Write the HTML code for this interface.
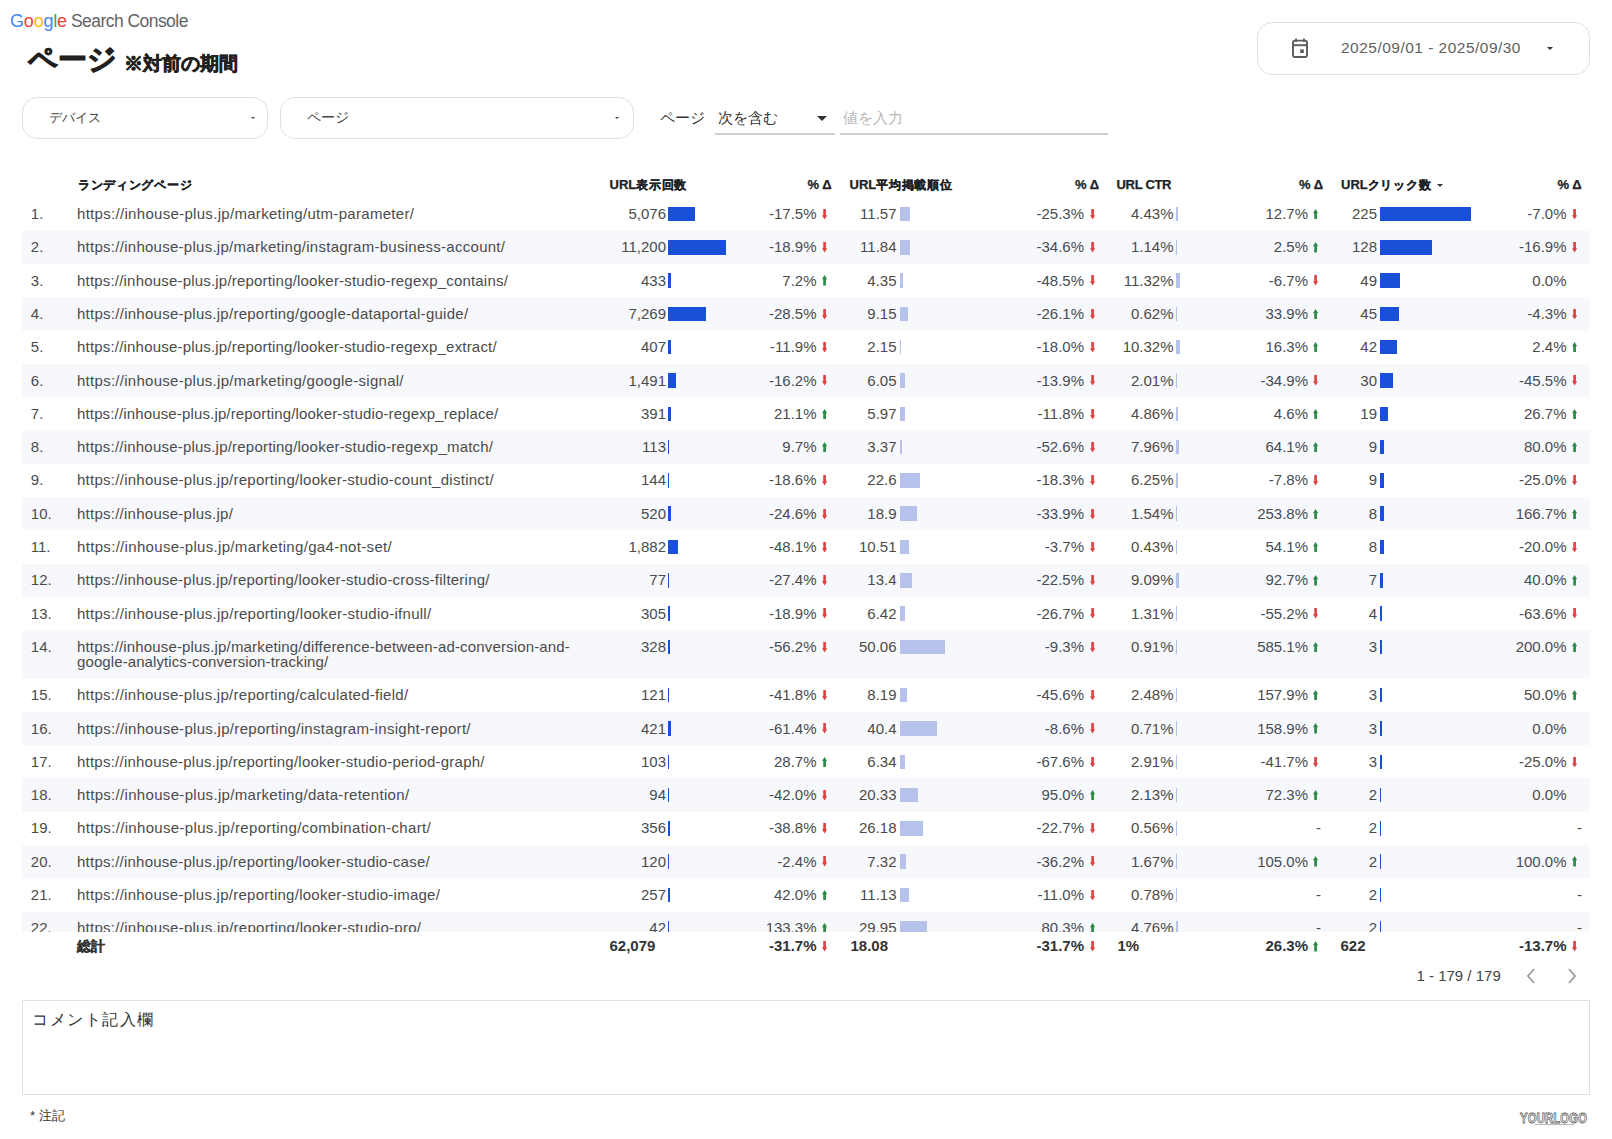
<!DOCTYPE html>
<html lang="ja"><head><meta charset="utf-8"><title>Search Console Report</title>
<style>
html,body{margin:0;padding:0;background:#fff;}
body{width:1612px;height:1139px;position:relative;overflow:hidden;font-family:"Liberation Sans",sans-serif;color:#3c3c3c;}
.abs{position:absolute;white-space:nowrap;}
.row{position:absolute;left:22px;width:1568px;background:#fff;}
.row.alt{background:#f7f8fb;}
.t{position:absolute;white-space:nowrap;font-size:15px;line-height:20px;height:20px;color:#4b4b4b;}
.url2{line-height:15.5px;height:auto;}
.bar{position:absolute;height:14.6px;}
.b1{background:#1a4fd7;}
.b2{background:#b7c2ea;}
.ar{position:absolute;}
.hd{position:absolute;white-space:nowrap;font-size:13px;font-weight:bold;color:#202124;line-height:20px;top:174.8px;-webkit-text-stroke:0.25px #202124;}
.jp{font-size:12px;letter-spacing:0.7px;}
.box{position:absolute;border:1.6px solid #e0e0e0;border-radius:15px;box-sizing:border-box;}
.tri{position:absolute;width:0;height:0;border-left:3px solid transparent;border-right:3px solid transparent;border-top:3px solid #333;}
</style></head><body>
<div class="abs" style="left:10px;top:8.5px;font-size:18px;line-height:24px;letter-spacing:-0.2px"><span style="color:#4285f4">G</span><span style="color:#ea4335">o</span><span style="color:#fbbc05">o</span><span style="color:#4285f4">g</span><span style="color:#34a853">l</span><span style="color:#ea4335">e</span></div>
<div class="abs" style="left:71px;top:8.5px;font-size:17.5px;line-height:24px;letter-spacing:-0.55px;color:#5f6368">Search Console</div>
<div class="abs" style="left:28px;top:40.5px;font-size:29px;line-height:36px;font-weight:bold;color:#202020;-webkit-text-stroke:0.9px #202020">ページ</div>
<div class="abs" style="left:124px;top:52px;font-size:19px;line-height:24px;font-weight:bold;color:#202020;-webkit-text-stroke:0.6px #202020">※対前の期間</div>

<div class="box" style="left:1257px;top:22px;width:333px;height:53px"></div>
<svg style="position:absolute;left:1290px;top:37px" width="20" height="22" viewBox="0 0 20 22"><path d="M6 2.2V4.2M14 2.2V4.2" stroke="#5a5a5a" stroke-width="1.8" stroke-linecap="round"/><rect x="3" y="3.6" width="14" height="16.4" rx="2" fill="none" stroke="#5a5a5a" stroke-width="1.9"/><path d="M3 8.2H17" stroke="#5a5a5a" stroke-width="1.9"/><rect x="10.2" y="12.4" width="3.6" height="3.6" fill="#5a5a5a"/></svg>
<div class="abs" style="left:1341px;top:38px;font-size:15.5px;line-height:20px;letter-spacing:0.48px;color:#5f5f5f">2025/09/01 - 2025/09/30</div>
<div class="tri" style="left:1547px;top:47px"></div>

<div class="box" style="left:22px;top:97px;width:246px;height:42px"></div>
<div class="abs" style="left:49px;top:108px;font-size:13px;line-height:20px;color:#444">デバイス</div>
<div class="tri" style="left:250.5px;top:117px;border-left-width:2.6px;border-right-width:2.6px;border-top-width:2.6px;border-top-color:#444"></div>
<div class="box" style="left:280px;top:97px;width:354px;height:42px"></div>
<div class="abs" style="left:307px;top:108px;font-size:13.5px;line-height:20px;color:#444">ページ</div>
<div class="tri" style="left:614.5px;top:117px;border-left-width:2.6px;border-right-width:2.6px;border-top-width:2.6px;border-top-color:#444"></div>

<div class="abs" style="left:660px;top:108px;font-size:15px;line-height:20px;color:#333">ページ</div>
<div class="abs" style="left:718px;top:108px;font-size:15px;line-height:20px;color:#333">次を含む</div>
<div class="tri" style="left:817px;top:116px;border-left-width:5px;border-right-width:5px;border-top-width:5px"></div>
<div class="abs" style="left:715px;top:133px;width:120px;height:1.5px;background:#cfcfcf"></div>
<div class="abs" style="left:843px;top:108px;font-size:15px;line-height:20px;color:#b8b8b8">値を入力</div>
<div class="abs" style="left:840px;top:133px;width:268px;height:1.5px;background:#cfcfcf"></div>

<div class="hd" style="left:78px"><span class="jp">ランディングページ</span></div>
<div class="hd" style="left:609.5px">URL<span class="jp">表示回数</span></div>
<div class="hd" style="right:780.5px">% Δ</div>
<div class="hd" style="left:849.5px">URL<span class="jp">平均掲載順位</span></div>
<div class="hd" style="right:513px">% Δ</div>
<div class="hd" style="left:1116.5px;letter-spacing:-0.3px">URL CTR</div>
<div class="hd" style="right:289px">% Δ</div>
<div class="hd" style="left:1341px">URL<span class="jp">クリック数</span></div>
<div class="tri" style="left:1437px;top:183.5px"></div>
<div class="hd" style="right:30.5px">% Δ</div>

<div style="position:absolute;left:0;top:0;width:1612px;height:931.5px;overflow:hidden">
<div class="row" style="top:197.35px;height:33.30px"></div>
<div class="t l" style="left:30.8px;top:204.00px">1.</div>
<div class="t l" style="left:77px;top:204.00px;letter-spacing:0.304px">https://inhouse-plus.jp/marketing/utm-parameter/</div>
<div class="t r" style="right:946.0px;top:204.00px">5,076</div>
<div class="bar b1" style="left:668px;top:206.70px;width:26.5px"></div>
<div class="t r" style="right:795.5px;top:204.00px">-17.5%</div>
<svg class="ar" style="left:821.8px;top:208.8px" width="5.2" height="10.5" viewBox="0 0 5.2 10.5"><path d="M1.25 0H3.95V6.2H5.2L2.6 10.5L0 6.2H1.25Z" fill="#dc4444"/></svg>
<div class="t r" style="right:715.5px;top:204.00px">11.57</div>
<div class="bar b2" style="left:899.5px;top:206.70px;width:10.3px"></div>
<div class="t r" style="right:528.0px;top:204.00px">-25.3%</div>
<svg class="ar" style="left:1089.6px;top:208.8px" width="5.2" height="10.5" viewBox="0 0 5.2 10.5"><path d="M1.25 0H3.95V6.2H5.2L2.6 10.5L0 6.2H1.25Z" fill="#dc4444"/></svg>
<div class="t r" style="right:438.5px;top:204.00px">4.43%</div>
<div class="bar b2" style="left:1175.6px;top:206.70px;width:2.0px"></div>
<div class="t r" style="right:304.0px;top:204.00px">12.7%</div>
<svg class="ar" style="left:1312.6px;top:208.8px" width="5.2" height="10.5" viewBox="0 0 5.2 10.5"><path d="M1.25 10.5H3.95V4.3H5.2L2.6 0L0 4.3H1.25Z" fill="#2a8a45"/></svg>
<div class="t r" style="right:235.0px;top:204.00px">225</div>
<div class="bar b1" style="left:1379.9px;top:206.70px;width:90.8px"></div>
<div class="t r" style="right:45.5px;top:204.00px">-7.0%</div>
<svg class="ar" style="left:1572.0px;top:208.8px" width="5.2" height="10.5" viewBox="0 0 5.2 10.5"><path d="M1.25 0H3.95V6.2H5.2L2.6 10.5L0 6.2H1.25Z" fill="#dc4444"/></svg>
<div class="row alt" style="top:230.65px;height:33.30px"></div>
<div class="t l" style="left:30.8px;top:237.30px">2.</div>
<div class="t l" style="left:77px;top:237.30px;letter-spacing:0.268px">https://inhouse-plus.jp/marketing/instagram-business-account/</div>
<div class="t r" style="right:946.0px;top:237.30px">11,200</div>
<div class="bar b1" style="left:668px;top:240.00px;width:57.8px"></div>
<div class="t r" style="right:795.5px;top:237.30px">-18.9%</div>
<svg class="ar" style="left:821.8px;top:242.0px" width="5.2" height="10.5" viewBox="0 0 5.2 10.5"><path d="M1.25 0H3.95V6.2H5.2L2.6 10.5L0 6.2H1.25Z" fill="#dc4444"/></svg>
<div class="t r" style="right:715.5px;top:237.30px">11.84</div>
<div class="bar b2" style="left:899.5px;top:240.00px;width:10.6px"></div>
<div class="t r" style="right:528.0px;top:237.30px">-34.6%</div>
<svg class="ar" style="left:1089.6px;top:242.0px" width="5.2" height="10.5" viewBox="0 0 5.2 10.5"><path d="M1.25 0H3.95V6.2H5.2L2.6 10.5L0 6.2H1.25Z" fill="#dc4444"/></svg>
<div class="t r" style="right:438.5px;top:237.30px">1.14%</div>
<div class="bar b2" style="left:1175.6px;top:240.00px;width:1.0px"></div>
<div class="t r" style="right:304.0px;top:237.30px">2.5%</div>
<svg class="ar" style="left:1312.6px;top:242.0px" width="5.2" height="10.5" viewBox="0 0 5.2 10.5"><path d="M1.25 10.5H3.95V4.3H5.2L2.6 0L0 4.3H1.25Z" fill="#2a8a45"/></svg>
<div class="t r" style="right:235.0px;top:237.30px">128</div>
<div class="bar b1" style="left:1379.9px;top:240.00px;width:52.0px"></div>
<div class="t r" style="right:45.5px;top:237.30px">-16.9%</div>
<svg class="ar" style="left:1572.0px;top:242.0px" width="5.2" height="10.5" viewBox="0 0 5.2 10.5"><path d="M1.25 0H3.95V6.2H5.2L2.6 10.5L0 6.2H1.25Z" fill="#dc4444"/></svg>
<div class="row" style="top:263.95px;height:33.30px"></div>
<div class="t l" style="left:30.8px;top:270.60px">3.</div>
<div class="t l" style="left:77px;top:270.60px;letter-spacing:0.194px">https://inhouse-plus.jp/reporting/looker-studio-regexp_contains/</div>
<div class="t r" style="right:946.0px;top:270.60px">433</div>
<div class="bar b1" style="left:668px;top:273.30px;width:2.8px"></div>
<div class="t r" style="right:795.5px;top:270.60px">7.2%</div>
<svg class="ar" style="left:821.8px;top:275.3px" width="5.2" height="10.5" viewBox="0 0 5.2 10.5"><path d="M1.25 10.5H3.95V4.3H5.2L2.6 0L0 4.3H1.25Z" fill="#2a8a45"/></svg>
<div class="t r" style="right:715.5px;top:270.60px">4.35</div>
<div class="bar b2" style="left:899.5px;top:273.30px;width:3.6px"></div>
<div class="t r" style="right:528.0px;top:270.60px">-48.5%</div>
<svg class="ar" style="left:1089.6px;top:275.3px" width="5.2" height="10.5" viewBox="0 0 5.2 10.5"><path d="M1.25 0H3.95V6.2H5.2L2.6 10.5L0 6.2H1.25Z" fill="#dc4444"/></svg>
<div class="t r" style="right:438.5px;top:270.60px">11.32%</div>
<div class="bar b2" style="left:1175.6px;top:273.30px;width:4.5px"></div>
<div class="t r" style="right:304.0px;top:270.60px">-6.7%</div>
<svg class="ar" style="left:1312.6px;top:275.3px" width="5.2" height="10.5" viewBox="0 0 5.2 10.5"><path d="M1.25 0H3.95V6.2H5.2L2.6 10.5L0 6.2H1.25Z" fill="#dc4444"/></svg>
<div class="t r" style="right:235.0px;top:270.60px">49</div>
<div class="bar b1" style="left:1379.9px;top:273.30px;width:20.4px"></div>
<div class="t r" style="right:45.5px;top:270.60px">0.0%</div>

<div class="row alt" style="top:297.25px;height:33.30px"></div>
<div class="t l" style="left:30.8px;top:303.90px">4.</div>
<div class="t l" style="left:77px;top:303.90px;letter-spacing:0.263px">https://inhouse-plus.jp/reporting/google-dataportal-guide/</div>
<div class="t r" style="right:946.0px;top:303.90px">7,269</div>
<div class="bar b1" style="left:668px;top:306.60px;width:37.7px"></div>
<div class="t r" style="right:795.5px;top:303.90px">-28.5%</div>
<svg class="ar" style="left:821.8px;top:308.6px" width="5.2" height="10.5" viewBox="0 0 5.2 10.5"><path d="M1.25 0H3.95V6.2H5.2L2.6 10.5L0 6.2H1.25Z" fill="#dc4444"/></svg>
<div class="t r" style="right:715.5px;top:303.90px">9.15</div>
<div class="bar b2" style="left:899.5px;top:306.60px;width:8.1px"></div>
<div class="t r" style="right:528.0px;top:303.90px">-26.1%</div>
<svg class="ar" style="left:1089.6px;top:308.6px" width="5.2" height="10.5" viewBox="0 0 5.2 10.5"><path d="M1.25 0H3.95V6.2H5.2L2.6 10.5L0 6.2H1.25Z" fill="#dc4444"/></svg>
<div class="t r" style="right:438.5px;top:303.90px">0.62%</div>
<div class="bar b2" style="left:1175.6px;top:306.60px;width:1.0px"></div>
<div class="t r" style="right:304.0px;top:303.90px">33.9%</div>
<svg class="ar" style="left:1312.6px;top:308.6px" width="5.2" height="10.5" viewBox="0 0 5.2 10.5"><path d="M1.25 10.5H3.95V4.3H5.2L2.6 0L0 4.3H1.25Z" fill="#2a8a45"/></svg>
<div class="t r" style="right:235.0px;top:303.90px">45</div>
<div class="bar b1" style="left:1379.9px;top:306.60px;width:18.8px"></div>
<div class="t r" style="right:45.5px;top:303.90px">-4.3%</div>
<svg class="ar" style="left:1572.0px;top:308.6px" width="5.2" height="10.5" viewBox="0 0 5.2 10.5"><path d="M1.25 0H3.95V6.2H5.2L2.6 10.5L0 6.2H1.25Z" fill="#dc4444"/></svg>
<div class="row" style="top:330.55px;height:33.30px"></div>
<div class="t l" style="left:30.8px;top:337.20px">5.</div>
<div class="t l" style="left:77px;top:337.20px;letter-spacing:0.192px">https://inhouse-plus.jp/reporting/looker-studio-regexp_extract/</div>
<div class="t r" style="right:946.0px;top:337.20px">407</div>
<div class="bar b1" style="left:668px;top:339.90px;width:2.7px"></div>
<div class="t r" style="right:795.5px;top:337.20px">-11.9%</div>
<svg class="ar" style="left:821.8px;top:341.9px" width="5.2" height="10.5" viewBox="0 0 5.2 10.5"><path d="M1.25 0H3.95V6.2H5.2L2.6 10.5L0 6.2H1.25Z" fill="#dc4444"/></svg>
<div class="t r" style="right:715.5px;top:337.20px">2.15</div>
<div class="bar b2" style="left:899.5px;top:339.90px;width:1.6px"></div>
<div class="t r" style="right:528.0px;top:337.20px">-18.0%</div>
<svg class="ar" style="left:1089.6px;top:341.9px" width="5.2" height="10.5" viewBox="0 0 5.2 10.5"><path d="M1.25 0H3.95V6.2H5.2L2.6 10.5L0 6.2H1.25Z" fill="#dc4444"/></svg>
<div class="t r" style="right:438.5px;top:337.20px">10.32%</div>
<div class="bar b2" style="left:1175.6px;top:339.90px;width:4.1px"></div>
<div class="t r" style="right:304.0px;top:337.20px">16.3%</div>
<svg class="ar" style="left:1312.6px;top:341.9px" width="5.2" height="10.5" viewBox="0 0 5.2 10.5"><path d="M1.25 10.5H3.95V4.3H5.2L2.6 0L0 4.3H1.25Z" fill="#2a8a45"/></svg>
<div class="t r" style="right:235.0px;top:337.20px">42</div>
<div class="bar b1" style="left:1379.9px;top:339.90px;width:17.6px"></div>
<div class="t r" style="right:45.5px;top:337.20px">2.4%</div>
<svg class="ar" style="left:1572.0px;top:341.9px" width="5.2" height="10.5" viewBox="0 0 5.2 10.5"><path d="M1.25 10.5H3.95V4.3H5.2L2.6 0L0 4.3H1.25Z" fill="#2a8a45"/></svg>
<div class="row alt" style="top:363.85px;height:33.30px"></div>
<div class="t l" style="left:30.8px;top:370.50px">6.</div>
<div class="t l" style="left:77px;top:370.50px;letter-spacing:0.277px">https://inhouse-plus.jp/marketing/google-signal/</div>
<div class="t r" style="right:946.0px;top:370.50px">1,491</div>
<div class="bar b1" style="left:668px;top:373.20px;width:8.2px"></div>
<div class="t r" style="right:795.5px;top:370.50px">-16.2%</div>
<svg class="ar" style="left:821.8px;top:375.2px" width="5.2" height="10.5" viewBox="0 0 5.2 10.5"><path d="M1.25 0H3.95V6.2H5.2L2.6 10.5L0 6.2H1.25Z" fill="#dc4444"/></svg>
<div class="t r" style="right:715.5px;top:370.50px">6.05</div>
<div class="bar b2" style="left:899.5px;top:373.20px;width:5.2px"></div>
<div class="t r" style="right:528.0px;top:370.50px">-13.9%</div>
<svg class="ar" style="left:1089.6px;top:375.2px" width="5.2" height="10.5" viewBox="0 0 5.2 10.5"><path d="M1.25 0H3.95V6.2H5.2L2.6 10.5L0 6.2H1.25Z" fill="#dc4444"/></svg>
<div class="t r" style="right:438.5px;top:370.50px">2.01%</div>
<div class="bar b2" style="left:1175.6px;top:373.20px;width:1.1px"></div>
<div class="t r" style="right:304.0px;top:370.50px">-34.9%</div>
<svg class="ar" style="left:1312.6px;top:375.2px" width="5.2" height="10.5" viewBox="0 0 5.2 10.5"><path d="M1.25 0H3.95V6.2H5.2L2.6 10.5L0 6.2H1.25Z" fill="#dc4444"/></svg>
<div class="t r" style="right:235.0px;top:370.50px">30</div>
<div class="bar b1" style="left:1379.9px;top:373.20px;width:12.8px"></div>
<div class="t r" style="right:45.5px;top:370.50px">-45.5%</div>
<svg class="ar" style="left:1572.0px;top:375.2px" width="5.2" height="10.5" viewBox="0 0 5.2 10.5"><path d="M1.25 0H3.95V6.2H5.2L2.6 10.5L0 6.2H1.25Z" fill="#dc4444"/></svg>
<div class="row" style="top:397.15px;height:33.30px"></div>
<div class="t l" style="left:30.8px;top:403.80px">7.</div>
<div class="t l" style="left:77px;top:403.80px;letter-spacing:0.150px">https://inhouse-plus.jp/reporting/looker-studio-regexp_replace/</div>
<div class="t r" style="right:946.0px;top:403.80px">391</div>
<div class="bar b1" style="left:668px;top:406.50px;width:2.6px"></div>
<div class="t r" style="right:795.5px;top:403.80px">21.1%</div>
<svg class="ar" style="left:821.8px;top:408.6px" width="5.2" height="10.5" viewBox="0 0 5.2 10.5"><path d="M1.25 10.5H3.95V4.3H5.2L2.6 0L0 4.3H1.25Z" fill="#2a8a45"/></svg>
<div class="t r" style="right:715.5px;top:403.80px">5.97</div>
<div class="bar b2" style="left:899.5px;top:406.50px;width:5.1px"></div>
<div class="t r" style="right:528.0px;top:403.80px">-11.8%</div>
<svg class="ar" style="left:1089.6px;top:408.6px" width="5.2" height="10.5" viewBox="0 0 5.2 10.5"><path d="M1.25 0H3.95V6.2H5.2L2.6 10.5L0 6.2H1.25Z" fill="#dc4444"/></svg>
<div class="t r" style="right:438.5px;top:403.80px">4.86%</div>
<div class="bar b2" style="left:1175.6px;top:406.50px;width:2.1px"></div>
<div class="t r" style="right:304.0px;top:403.80px">4.6%</div>
<svg class="ar" style="left:1312.6px;top:408.6px" width="5.2" height="10.5" viewBox="0 0 5.2 10.5"><path d="M1.25 10.5H3.95V4.3H5.2L2.6 0L0 4.3H1.25Z" fill="#2a8a45"/></svg>
<div class="t r" style="right:235.0px;top:403.80px">19</div>
<div class="bar b1" style="left:1379.9px;top:406.50px;width:8.4px"></div>
<div class="t r" style="right:45.5px;top:403.80px">26.7%</div>
<svg class="ar" style="left:1572.0px;top:408.6px" width="5.2" height="10.5" viewBox="0 0 5.2 10.5"><path d="M1.25 10.5H3.95V4.3H5.2L2.6 0L0 4.3H1.25Z" fill="#2a8a45"/></svg>
<div class="row alt" style="top:430.45px;height:33.30px"></div>
<div class="t l" style="left:30.8px;top:437.10px">8.</div>
<div class="t l" style="left:77px;top:437.10px;letter-spacing:0.208px">https://inhouse-plus.jp/reporting/looker-studio-regexp_match/</div>
<div class="t r" style="right:946.0px;top:437.10px">113</div>
<div class="bar b1" style="left:668px;top:439.80px;width:1.2px"></div>
<div class="t r" style="right:795.5px;top:437.10px">9.7%</div>
<svg class="ar" style="left:821.8px;top:441.9px" width="5.2" height="10.5" viewBox="0 0 5.2 10.5"><path d="M1.25 10.5H3.95V4.3H5.2L2.6 0L0 4.3H1.25Z" fill="#2a8a45"/></svg>
<div class="t r" style="right:715.5px;top:437.10px">3.37</div>
<div class="bar b2" style="left:899.5px;top:439.80px;width:2.7px"></div>
<div class="t r" style="right:528.0px;top:437.10px">-52.6%</div>
<svg class="ar" style="left:1089.6px;top:441.9px" width="5.2" height="10.5" viewBox="0 0 5.2 10.5"><path d="M1.25 0H3.95V6.2H5.2L2.6 10.5L0 6.2H1.25Z" fill="#dc4444"/></svg>
<div class="t r" style="right:438.5px;top:437.10px">7.96%</div>
<div class="bar b2" style="left:1175.6px;top:439.80px;width:3.3px"></div>
<div class="t r" style="right:304.0px;top:437.10px">64.1%</div>
<svg class="ar" style="left:1312.6px;top:441.9px" width="5.2" height="10.5" viewBox="0 0 5.2 10.5"><path d="M1.25 10.5H3.95V4.3H5.2L2.6 0L0 4.3H1.25Z" fill="#2a8a45"/></svg>
<div class="t r" style="right:235.0px;top:437.10px">9</div>
<div class="bar b1" style="left:1379.9px;top:439.80px;width:4.4px"></div>
<div class="t r" style="right:45.5px;top:437.10px">80.0%</div>
<svg class="ar" style="left:1572.0px;top:441.9px" width="5.2" height="10.5" viewBox="0 0 5.2 10.5"><path d="M1.25 10.5H3.95V4.3H5.2L2.6 0L0 4.3H1.25Z" fill="#2a8a45"/></svg>
<div class="row" style="top:463.75px;height:33.30px"></div>
<div class="t l" style="left:30.8px;top:470.40px">9.</div>
<div class="t l" style="left:77px;top:470.40px;letter-spacing:0.266px">https://inhouse-plus.jp/reporting/looker-studio-count_distinct/</div>
<div class="t r" style="right:946.0px;top:470.40px">144</div>
<div class="bar b1" style="left:668px;top:473.10px;width:1.3px"></div>
<div class="t r" style="right:795.5px;top:470.40px">-18.6%</div>
<svg class="ar" style="left:821.8px;top:475.2px" width="5.2" height="10.5" viewBox="0 0 5.2 10.5"><path d="M1.25 0H3.95V6.2H5.2L2.6 10.5L0 6.2H1.25Z" fill="#dc4444"/></svg>
<div class="t r" style="right:715.5px;top:470.40px">22.6</div>
<div class="bar b2" style="left:899.5px;top:473.10px;width:20.5px"></div>
<div class="t r" style="right:528.0px;top:470.40px">-18.3%</div>
<svg class="ar" style="left:1089.6px;top:475.2px" width="5.2" height="10.5" viewBox="0 0 5.2 10.5"><path d="M1.25 0H3.95V6.2H5.2L2.6 10.5L0 6.2H1.25Z" fill="#dc4444"/></svg>
<div class="t r" style="right:438.5px;top:470.40px">6.25%</div>
<div class="bar b2" style="left:1175.6px;top:473.10px;width:2.6px"></div>
<div class="t r" style="right:304.0px;top:470.40px">-7.8%</div>
<svg class="ar" style="left:1312.6px;top:475.2px" width="5.2" height="10.5" viewBox="0 0 5.2 10.5"><path d="M1.25 0H3.95V6.2H5.2L2.6 10.5L0 6.2H1.25Z" fill="#dc4444"/></svg>
<div class="t r" style="right:235.0px;top:470.40px">9</div>
<div class="bar b1" style="left:1379.9px;top:473.10px;width:4.4px"></div>
<div class="t r" style="right:45.5px;top:470.40px">-25.0%</div>
<svg class="ar" style="left:1572.0px;top:475.2px" width="5.2" height="10.5" viewBox="0 0 5.2 10.5"><path d="M1.25 0H3.95V6.2H5.2L2.6 10.5L0 6.2H1.25Z" fill="#dc4444"/></svg>
<div class="row alt" style="top:497.05px;height:33.30px"></div>
<div class="t l" style="left:30.8px;top:503.70px">10.</div>
<div class="t l" style="left:77px;top:503.70px;letter-spacing:0.252px">https://inhouse-plus.jp/</div>
<div class="t r" style="right:946.0px;top:503.70px">520</div>
<div class="bar b1" style="left:668px;top:506.40px;width:3.3px"></div>
<div class="t r" style="right:795.5px;top:503.70px">-24.6%</div>
<svg class="ar" style="left:821.8px;top:508.5px" width="5.2" height="10.5" viewBox="0 0 5.2 10.5"><path d="M1.25 0H3.95V6.2H5.2L2.6 10.5L0 6.2H1.25Z" fill="#dc4444"/></svg>
<div class="t r" style="right:715.5px;top:503.70px">18.9</div>
<div class="bar b2" style="left:899.5px;top:506.40px;width:17.1px"></div>
<div class="t r" style="right:528.0px;top:503.70px">-33.9%</div>
<svg class="ar" style="left:1089.6px;top:508.5px" width="5.2" height="10.5" viewBox="0 0 5.2 10.5"><path d="M1.25 0H3.95V6.2H5.2L2.6 10.5L0 6.2H1.25Z" fill="#dc4444"/></svg>
<div class="t r" style="right:438.5px;top:503.70px">1.54%</div>
<div class="bar b2" style="left:1175.6px;top:506.40px;width:1.0px"></div>
<div class="t r" style="right:304.0px;top:503.70px">253.8%</div>
<svg class="ar" style="left:1312.6px;top:508.5px" width="5.2" height="10.5" viewBox="0 0 5.2 10.5"><path d="M1.25 10.5H3.95V4.3H5.2L2.6 0L0 4.3H1.25Z" fill="#2a8a45"/></svg>
<div class="t r" style="right:235.0px;top:503.70px">8</div>
<div class="bar b1" style="left:1379.9px;top:506.40px;width:4.0px"></div>
<div class="t r" style="right:45.5px;top:503.70px">166.7%</div>
<svg class="ar" style="left:1572.0px;top:508.5px" width="5.2" height="10.5" viewBox="0 0 5.2 10.5"><path d="M1.25 10.5H3.95V4.3H5.2L2.6 0L0 4.3H1.25Z" fill="#2a8a45"/></svg>
<div class="row" style="top:530.35px;height:33.30px"></div>
<div class="t l" style="left:30.8px;top:537.00px">11.</div>
<div class="t l" style="left:77px;top:537.00px;letter-spacing:0.324px">https://inhouse-plus.jp/marketing/ga4-not-set/</div>
<div class="t r" style="right:946.0px;top:537.00px">1,882</div>
<div class="bar b1" style="left:668px;top:539.70px;width:10.2px"></div>
<div class="t r" style="right:795.5px;top:537.00px">-48.1%</div>
<svg class="ar" style="left:821.8px;top:541.8px" width="5.2" height="10.5" viewBox="0 0 5.2 10.5"><path d="M1.25 0H3.95V6.2H5.2L2.6 10.5L0 6.2H1.25Z" fill="#dc4444"/></svg>
<div class="t r" style="right:715.5px;top:537.00px">10.51</div>
<div class="bar b2" style="left:899.5px;top:539.70px;width:9.3px"></div>
<div class="t r" style="right:528.0px;top:537.00px">-3.7%</div>
<svg class="ar" style="left:1089.6px;top:541.8px" width="5.2" height="10.5" viewBox="0 0 5.2 10.5"><path d="M1.25 0H3.95V6.2H5.2L2.6 10.5L0 6.2H1.25Z" fill="#dc4444"/></svg>
<div class="t r" style="right:438.5px;top:537.00px">0.43%</div>
<div class="bar b2" style="left:1175.6px;top:539.70px;width:1.0px"></div>
<div class="t r" style="right:304.0px;top:537.00px">54.1%</div>
<svg class="ar" style="left:1312.6px;top:541.8px" width="5.2" height="10.5" viewBox="0 0 5.2 10.5"><path d="M1.25 10.5H3.95V4.3H5.2L2.6 0L0 4.3H1.25Z" fill="#2a8a45"/></svg>
<div class="t r" style="right:235.0px;top:537.00px">8</div>
<div class="bar b1" style="left:1379.9px;top:539.70px;width:4.0px"></div>
<div class="t r" style="right:45.5px;top:537.00px">-20.0%</div>
<svg class="ar" style="left:1572.0px;top:541.8px" width="5.2" height="10.5" viewBox="0 0 5.2 10.5"><path d="M1.25 0H3.95V6.2H5.2L2.6 10.5L0 6.2H1.25Z" fill="#dc4444"/></svg>
<div class="row alt" style="top:563.65px;height:33.30px"></div>
<div class="t l" style="left:30.8px;top:570.30px">12.</div>
<div class="t l" style="left:77px;top:570.30px;letter-spacing:0.235px">https://inhouse-plus.jp/reporting/looker-studio-cross-filtering/</div>
<div class="t r" style="right:946.0px;top:570.30px">77</div>
<div class="bar b1" style="left:668px;top:573.00px;width:1.0px"></div>
<div class="t r" style="right:795.5px;top:570.30px">-27.4%</div>
<svg class="ar" style="left:821.8px;top:575.0px" width="5.2" height="10.5" viewBox="0 0 5.2 10.5"><path d="M1.25 0H3.95V6.2H5.2L2.6 10.5L0 6.2H1.25Z" fill="#dc4444"/></svg>
<div class="t r" style="right:715.5px;top:570.30px">13.4</div>
<div class="bar b2" style="left:899.5px;top:573.00px;width:12.0px"></div>
<div class="t r" style="right:528.0px;top:570.30px">-22.5%</div>
<svg class="ar" style="left:1089.6px;top:575.0px" width="5.2" height="10.5" viewBox="0 0 5.2 10.5"><path d="M1.25 0H3.95V6.2H5.2L2.6 10.5L0 6.2H1.25Z" fill="#dc4444"/></svg>
<div class="t r" style="right:438.5px;top:570.30px">9.09%</div>
<div class="bar b2" style="left:1175.6px;top:573.00px;width:3.7px"></div>
<div class="t r" style="right:304.0px;top:570.30px">92.7%</div>
<svg class="ar" style="left:1312.6px;top:575.0px" width="5.2" height="10.5" viewBox="0 0 5.2 10.5"><path d="M1.25 10.5H3.95V4.3H5.2L2.6 0L0 4.3H1.25Z" fill="#2a8a45"/></svg>
<div class="t r" style="right:235.0px;top:570.30px">7</div>
<div class="bar b1" style="left:1379.9px;top:573.00px;width:3.6px"></div>
<div class="t r" style="right:45.5px;top:570.30px">40.0%</div>
<svg class="ar" style="left:1572.0px;top:575.0px" width="5.2" height="10.5" viewBox="0 0 5.2 10.5"><path d="M1.25 10.5H3.95V4.3H5.2L2.6 0L0 4.3H1.25Z" fill="#2a8a45"/></svg>
<div class="row" style="top:596.95px;height:33.30px"></div>
<div class="t l" style="left:30.8px;top:603.60px">13.</div>
<div class="t l" style="left:77px;top:603.60px;letter-spacing:0.274px">https://inhouse-plus.jp/reporting/looker-studio-ifnull/</div>
<div class="t r" style="right:946.0px;top:603.60px">305</div>
<div class="bar b1" style="left:668px;top:606.30px;width:2.2px"></div>
<div class="t r" style="right:795.5px;top:603.60px">-18.9%</div>
<svg class="ar" style="left:821.8px;top:608.3px" width="5.2" height="10.5" viewBox="0 0 5.2 10.5"><path d="M1.25 0H3.95V6.2H5.2L2.6 10.5L0 6.2H1.25Z" fill="#dc4444"/></svg>
<div class="t r" style="right:715.5px;top:603.60px">6.42</div>
<div class="bar b2" style="left:899.5px;top:606.30px;width:5.5px"></div>
<div class="t r" style="right:528.0px;top:603.60px">-26.7%</div>
<svg class="ar" style="left:1089.6px;top:608.3px" width="5.2" height="10.5" viewBox="0 0 5.2 10.5"><path d="M1.25 0H3.95V6.2H5.2L2.6 10.5L0 6.2H1.25Z" fill="#dc4444"/></svg>
<div class="t r" style="right:438.5px;top:603.60px">1.31%</div>
<div class="bar b2" style="left:1175.6px;top:606.30px;width:1.0px"></div>
<div class="t r" style="right:304.0px;top:603.60px">-55.2%</div>
<svg class="ar" style="left:1312.6px;top:608.3px" width="5.2" height="10.5" viewBox="0 0 5.2 10.5"><path d="M1.25 0H3.95V6.2H5.2L2.6 10.5L0 6.2H1.25Z" fill="#dc4444"/></svg>
<div class="t r" style="right:235.0px;top:603.60px">4</div>
<div class="bar b1" style="left:1379.9px;top:606.30px;width:2.4px"></div>
<div class="t r" style="right:45.5px;top:603.60px">-63.6%</div>
<svg class="ar" style="left:1572.0px;top:608.3px" width="5.2" height="10.5" viewBox="0 0 5.2 10.5"><path d="M1.25 0H3.95V6.2H5.2L2.6 10.5L0 6.2H1.25Z" fill="#dc4444"/></svg>
<div class="row alt" style="top:630.25px;height:48.30px"></div>
<div class="t l" style="left:30.8px;top:636.90px">14.</div>
<div class="t l" style="left:77px;top:636.90px;letter-spacing:0.160px">https://inhouse-plus.jp/marketing/difference-between-ad-conversion-and-</div>
<div class="t l" style="left:77px;top:651.90px;letter-spacing:0.097px">google-analytics-conversion-tracking/</div>
<div class="t r" style="right:946.0px;top:636.90px">328</div>
<div class="bar b1" style="left:668px;top:639.60px;width:2.3px"></div>
<div class="t r" style="right:795.5px;top:636.90px">-56.2%</div>
<svg class="ar" style="left:821.8px;top:641.6px" width="5.2" height="10.5" viewBox="0 0 5.2 10.5"><path d="M1.25 0H3.95V6.2H5.2L2.6 10.5L0 6.2H1.25Z" fill="#dc4444"/></svg>
<div class="t r" style="right:715.5px;top:636.90px">50.06</div>
<div class="bar b2" style="left:899.5px;top:639.60px;width:45.9px"></div>
<div class="t r" style="right:528.0px;top:636.90px">-9.3%</div>
<svg class="ar" style="left:1089.6px;top:641.6px" width="5.2" height="10.5" viewBox="0 0 5.2 10.5"><path d="M1.25 0H3.95V6.2H5.2L2.6 10.5L0 6.2H1.25Z" fill="#dc4444"/></svg>
<div class="t r" style="right:438.5px;top:636.90px">0.91%</div>
<div class="bar b2" style="left:1175.6px;top:639.60px;width:1.0px"></div>
<div class="t r" style="right:304.0px;top:636.90px">585.1%</div>
<svg class="ar" style="left:1312.6px;top:641.6px" width="5.2" height="10.5" viewBox="0 0 5.2 10.5"><path d="M1.25 10.5H3.95V4.3H5.2L2.6 0L0 4.3H1.25Z" fill="#2a8a45"/></svg>
<div class="t r" style="right:235.0px;top:636.90px">3</div>
<div class="bar b1" style="left:1379.9px;top:639.60px;width:2.0px"></div>
<div class="t r" style="right:45.5px;top:636.90px">200.0%</div>
<svg class="ar" style="left:1572.0px;top:641.6px" width="5.2" height="10.5" viewBox="0 0 5.2 10.5"><path d="M1.25 10.5H3.95V4.3H5.2L2.6 0L0 4.3H1.25Z" fill="#2a8a45"/></svg>
<div class="row" style="top:678.55px;height:33.30px"></div>
<div class="t l" style="left:30.8px;top:685.20px">15.</div>
<div class="t l" style="left:77px;top:685.20px;letter-spacing:0.268px">https://inhouse-plus.jp/reporting/calculated-field/</div>
<div class="t r" style="right:946.0px;top:685.20px">121</div>
<div class="bar b1" style="left:668px;top:687.90px;width:1.2px"></div>
<div class="t r" style="right:795.5px;top:685.20px">-41.8%</div>
<svg class="ar" style="left:821.8px;top:689.9px" width="5.2" height="10.5" viewBox="0 0 5.2 10.5"><path d="M1.25 0H3.95V6.2H5.2L2.6 10.5L0 6.2H1.25Z" fill="#dc4444"/></svg>
<div class="t r" style="right:715.5px;top:685.20px">8.19</div>
<div class="bar b2" style="left:899.5px;top:687.90px;width:7.2px"></div>
<div class="t r" style="right:528.0px;top:685.20px">-45.6%</div>
<svg class="ar" style="left:1089.6px;top:689.9px" width="5.2" height="10.5" viewBox="0 0 5.2 10.5"><path d="M1.25 0H3.95V6.2H5.2L2.6 10.5L0 6.2H1.25Z" fill="#dc4444"/></svg>
<div class="t r" style="right:438.5px;top:685.20px">2.48%</div>
<div class="bar b2" style="left:1175.6px;top:687.90px;width:1.3px"></div>
<div class="t r" style="right:304.0px;top:685.20px">157.9%</div>
<svg class="ar" style="left:1312.6px;top:689.9px" width="5.2" height="10.5" viewBox="0 0 5.2 10.5"><path d="M1.25 10.5H3.95V4.3H5.2L2.6 0L0 4.3H1.25Z" fill="#2a8a45"/></svg>
<div class="t r" style="right:235.0px;top:685.20px">3</div>
<div class="bar b1" style="left:1379.9px;top:687.90px;width:2.0px"></div>
<div class="t r" style="right:45.5px;top:685.20px">50.0%</div>
<svg class="ar" style="left:1572.0px;top:689.9px" width="5.2" height="10.5" viewBox="0 0 5.2 10.5"><path d="M1.25 10.5H3.95V4.3H5.2L2.6 0L0 4.3H1.25Z" fill="#2a8a45"/></svg>
<div class="row alt" style="top:711.85px;height:33.30px"></div>
<div class="t l" style="left:30.8px;top:718.50px">16.</div>
<div class="t l" style="left:77px;top:718.50px;letter-spacing:0.302px">https://inhouse-plus.jp/reporting/instagram-insight-report/</div>
<div class="t r" style="right:946.0px;top:718.50px">421</div>
<div class="bar b1" style="left:668px;top:721.20px;width:2.8px"></div>
<div class="t r" style="right:795.5px;top:718.50px">-61.4%</div>
<svg class="ar" style="left:821.8px;top:723.2px" width="5.2" height="10.5" viewBox="0 0 5.2 10.5"><path d="M1.25 0H3.95V6.2H5.2L2.6 10.5L0 6.2H1.25Z" fill="#dc4444"/></svg>
<div class="t r" style="right:715.5px;top:718.50px">40.4</div>
<div class="bar b2" style="left:899.5px;top:721.20px;width:37.0px"></div>
<div class="t r" style="right:528.0px;top:718.50px">-8.6%</div>
<svg class="ar" style="left:1089.6px;top:723.2px" width="5.2" height="10.5" viewBox="0 0 5.2 10.5"><path d="M1.25 0H3.95V6.2H5.2L2.6 10.5L0 6.2H1.25Z" fill="#dc4444"/></svg>
<div class="t r" style="right:438.5px;top:718.50px">0.71%</div>
<div class="bar b2" style="left:1175.6px;top:721.20px;width:1.0px"></div>
<div class="t r" style="right:304.0px;top:718.50px">158.9%</div>
<svg class="ar" style="left:1312.6px;top:723.2px" width="5.2" height="10.5" viewBox="0 0 5.2 10.5"><path d="M1.25 10.5H3.95V4.3H5.2L2.6 0L0 4.3H1.25Z" fill="#2a8a45"/></svg>
<div class="t r" style="right:235.0px;top:718.50px">3</div>
<div class="bar b1" style="left:1379.9px;top:721.20px;width:2.0px"></div>
<div class="t r" style="right:45.5px;top:718.50px">0.0%</div>

<div class="row" style="top:745.15px;height:33.30px"></div>
<div class="t l" style="left:30.8px;top:751.80px">17.</div>
<div class="t l" style="left:77px;top:751.80px;letter-spacing:0.232px">https://inhouse-plus.jp/reporting/looker-studio-period-graph/</div>
<div class="t r" style="right:946.0px;top:751.80px">103</div>
<div class="bar b1" style="left:668px;top:754.50px;width:1.1px"></div>
<div class="t r" style="right:795.5px;top:751.80px">28.7%</div>
<svg class="ar" style="left:821.8px;top:756.5px" width="5.2" height="10.5" viewBox="0 0 5.2 10.5"><path d="M1.25 10.5H3.95V4.3H5.2L2.6 0L0 4.3H1.25Z" fill="#2a8a45"/></svg>
<div class="t r" style="right:715.5px;top:751.80px">6.34</div>
<div class="bar b2" style="left:899.5px;top:754.50px;width:5.5px"></div>
<div class="t r" style="right:528.0px;top:751.80px">-67.6%</div>
<svg class="ar" style="left:1089.6px;top:756.5px" width="5.2" height="10.5" viewBox="0 0 5.2 10.5"><path d="M1.25 0H3.95V6.2H5.2L2.6 10.5L0 6.2H1.25Z" fill="#dc4444"/></svg>
<div class="t r" style="right:438.5px;top:751.80px">2.91%</div>
<div class="bar b2" style="left:1175.6px;top:754.50px;width:1.4px"></div>
<div class="t r" style="right:304.0px;top:751.80px">-41.7%</div>
<svg class="ar" style="left:1312.6px;top:756.5px" width="5.2" height="10.5" viewBox="0 0 5.2 10.5"><path d="M1.25 0H3.95V6.2H5.2L2.6 10.5L0 6.2H1.25Z" fill="#dc4444"/></svg>
<div class="t r" style="right:235.0px;top:751.80px">3</div>
<div class="bar b1" style="left:1379.9px;top:754.50px;width:2.0px"></div>
<div class="t r" style="right:45.5px;top:751.80px">-25.0%</div>
<svg class="ar" style="left:1572.0px;top:756.5px" width="5.2" height="10.5" viewBox="0 0 5.2 10.5"><path d="M1.25 0H3.95V6.2H5.2L2.6 10.5L0 6.2H1.25Z" fill="#dc4444"/></svg>
<div class="row alt" style="top:778.45px;height:33.30px"></div>
<div class="t l" style="left:30.8px;top:785.10px">18.</div>
<div class="t l" style="left:77px;top:785.10px;letter-spacing:0.317px">https://inhouse-plus.jp/marketing/data-retention/</div>
<div class="t r" style="right:946.0px;top:785.10px">94</div>
<div class="bar b1" style="left:668px;top:787.80px;width:1.1px"></div>
<div class="t r" style="right:795.5px;top:785.10px">-42.0%</div>
<svg class="ar" style="left:821.8px;top:789.8px" width="5.2" height="10.5" viewBox="0 0 5.2 10.5"><path d="M1.25 0H3.95V6.2H5.2L2.6 10.5L0 6.2H1.25Z" fill="#dc4444"/></svg>
<div class="t r" style="right:715.5px;top:785.10px">20.33</div>
<div class="bar b2" style="left:899.5px;top:787.80px;width:18.4px"></div>
<div class="t r" style="right:528.0px;top:785.10px">95.0%</div>
<svg class="ar" style="left:1089.6px;top:789.8px" width="5.2" height="10.5" viewBox="0 0 5.2 10.5"><path d="M1.25 10.5H3.95V4.3H5.2L2.6 0L0 4.3H1.25Z" fill="#2a8a45"/></svg>
<div class="t r" style="right:438.5px;top:785.10px">2.13%</div>
<div class="bar b2" style="left:1175.6px;top:787.80px;width:1.2px"></div>
<div class="t r" style="right:304.0px;top:785.10px">72.3%</div>
<svg class="ar" style="left:1312.6px;top:789.8px" width="5.2" height="10.5" viewBox="0 0 5.2 10.5"><path d="M1.25 10.5H3.95V4.3H5.2L2.6 0L0 4.3H1.25Z" fill="#2a8a45"/></svg>
<div class="t r" style="right:235.0px;top:785.10px">2</div>
<div class="bar b1" style="left:1379.9px;top:787.80px;width:1.6px"></div>
<div class="t r" style="right:45.5px;top:785.10px">0.0%</div>

<div class="row" style="top:811.75px;height:33.30px"></div>
<div class="t l" style="left:30.8px;top:818.40px">19.</div>
<div class="t l" style="left:77px;top:818.40px;letter-spacing:0.329px">https://inhouse-plus.jp/reporting/combination-chart/</div>
<div class="t r" style="right:946.0px;top:818.40px">356</div>
<div class="bar b1" style="left:668px;top:821.10px;width:2.4px"></div>
<div class="t r" style="right:795.5px;top:818.40px">-38.8%</div>
<svg class="ar" style="left:821.8px;top:823.1px" width="5.2" height="10.5" viewBox="0 0 5.2 10.5"><path d="M1.25 0H3.95V6.2H5.2L2.6 10.5L0 6.2H1.25Z" fill="#dc4444"/></svg>
<div class="t r" style="right:715.5px;top:818.40px">26.18</div>
<div class="bar b2" style="left:899.5px;top:821.10px;width:23.8px"></div>
<div class="t r" style="right:528.0px;top:818.40px">-22.7%</div>
<svg class="ar" style="left:1089.6px;top:823.1px" width="5.2" height="10.5" viewBox="0 0 5.2 10.5"><path d="M1.25 0H3.95V6.2H5.2L2.6 10.5L0 6.2H1.25Z" fill="#dc4444"/></svg>
<div class="t r" style="right:438.5px;top:818.40px">0.56%</div>
<div class="bar b2" style="left:1175.6px;top:821.10px;width:1.0px"></div>
<div class="t r" style="right:291.0px;top:818.40px">-</div>

<div class="t r" style="right:235.0px;top:818.40px">2</div>
<div class="bar b1" style="left:1379.9px;top:821.10px;width:1.6px"></div>
<div class="t r" style="right:30.0px;top:818.40px">-</div>

<div class="row alt" style="top:845.05px;height:33.30px"></div>
<div class="t l" style="left:30.8px;top:851.70px">20.</div>
<div class="t l" style="left:77px;top:851.70px;letter-spacing:0.240px">https://inhouse-plus.jp/reporting/looker-studio-case/</div>
<div class="t r" style="right:946.0px;top:851.70px">120</div>
<div class="bar b1" style="left:668px;top:854.40px;width:1.2px"></div>
<div class="t r" style="right:795.5px;top:851.70px">-2.4%</div>
<svg class="ar" style="left:821.8px;top:856.4px" width="5.2" height="10.5" viewBox="0 0 5.2 10.5"><path d="M1.25 0H3.95V6.2H5.2L2.6 10.5L0 6.2H1.25Z" fill="#dc4444"/></svg>
<div class="t r" style="right:715.5px;top:851.70px">7.32</div>
<div class="bar b2" style="left:899.5px;top:854.40px;width:6.4px"></div>
<div class="t r" style="right:528.0px;top:851.70px">-36.2%</div>
<svg class="ar" style="left:1089.6px;top:856.4px" width="5.2" height="10.5" viewBox="0 0 5.2 10.5"><path d="M1.25 0H3.95V6.2H5.2L2.6 10.5L0 6.2H1.25Z" fill="#dc4444"/></svg>
<div class="t r" style="right:438.5px;top:851.70px">1.67%</div>
<div class="bar b2" style="left:1175.6px;top:854.40px;width:1.0px"></div>
<div class="t r" style="right:304.0px;top:851.70px">105.0%</div>
<svg class="ar" style="left:1312.6px;top:856.4px" width="5.2" height="10.5" viewBox="0 0 5.2 10.5"><path d="M1.25 10.5H3.95V4.3H5.2L2.6 0L0 4.3H1.25Z" fill="#2a8a45"/></svg>
<div class="t r" style="right:235.0px;top:851.70px">2</div>
<div class="bar b1" style="left:1379.9px;top:854.40px;width:1.6px"></div>
<div class="t r" style="right:45.5px;top:851.70px">100.0%</div>
<svg class="ar" style="left:1572.0px;top:856.4px" width="5.2" height="10.5" viewBox="0 0 5.2 10.5"><path d="M1.25 10.5H3.95V4.3H5.2L2.6 0L0 4.3H1.25Z" fill="#2a8a45"/></svg>
<div class="row" style="top:878.35px;height:33.30px"></div>
<div class="t l" style="left:30.8px;top:885.00px">21.</div>
<div class="t l" style="left:77px;top:885.00px;letter-spacing:0.255px">https://inhouse-plus.jp/reporting/looker-studio-image/</div>
<div class="t r" style="right:946.0px;top:885.00px">257</div>
<div class="bar b1" style="left:668px;top:887.70px;width:1.9px"></div>
<div class="t r" style="right:795.5px;top:885.00px">42.0%</div>
<svg class="ar" style="left:821.8px;top:889.7px" width="5.2" height="10.5" viewBox="0 0 5.2 10.5"><path d="M1.25 10.5H3.95V4.3H5.2L2.6 0L0 4.3H1.25Z" fill="#2a8a45"/></svg>
<div class="t r" style="right:715.5px;top:885.00px">11.13</div>
<div class="bar b2" style="left:899.5px;top:887.70px;width:9.9px"></div>
<div class="t r" style="right:528.0px;top:885.00px">-11.0%</div>
<svg class="ar" style="left:1089.6px;top:889.7px" width="5.2" height="10.5" viewBox="0 0 5.2 10.5"><path d="M1.25 0H3.95V6.2H5.2L2.6 10.5L0 6.2H1.25Z" fill="#dc4444"/></svg>
<div class="t r" style="right:438.5px;top:885.00px">0.78%</div>
<div class="bar b2" style="left:1175.6px;top:887.70px;width:1.0px"></div>
<div class="t r" style="right:291.0px;top:885.00px">-</div>

<div class="t r" style="right:235.0px;top:885.00px">2</div>
<div class="bar b1" style="left:1379.9px;top:887.70px;width:1.6px"></div>
<div class="t r" style="right:30.0px;top:885.00px">-</div>

<div class="row alt" style="top:911.65px;height:33.30px"></div>
<div class="t l" style="left:30.8px;top:918.30px">22.</div>
<div class="t l" style="left:77px;top:918.30px;letter-spacing:0.271px">https://inhouse-plus.jp/reporting/looker-studio-pro/</div>
<div class="t r" style="right:946.0px;top:918.30px">42</div>
<div class="bar b1" style="left:668px;top:921.00px;width:1.0px"></div>
<div class="t r" style="right:795.5px;top:918.30px">133.3%</div>
<svg class="ar" style="left:821.8px;top:923.0px" width="5.2" height="10.5" viewBox="0 0 5.2 10.5"><path d="M1.25 10.5H3.95V4.3H5.2L2.6 0L0 4.3H1.25Z" fill="#2a8a45"/></svg>
<div class="t r" style="right:715.5px;top:918.30px">29.95</div>
<div class="bar b2" style="left:899.5px;top:921.00px;width:27.3px"></div>
<div class="t r" style="right:528.0px;top:918.30px">80.3%</div>
<svg class="ar" style="left:1089.6px;top:923.0px" width="5.2" height="10.5" viewBox="0 0 5.2 10.5"><path d="M1.25 10.5H3.95V4.3H5.2L2.6 0L0 4.3H1.25Z" fill="#2a8a45"/></svg>
<div class="t r" style="right:438.5px;top:918.30px">4.76%</div>
<div class="bar b2" style="left:1175.6px;top:921.00px;width:2.1px"></div>
<div class="t r" style="right:291.0px;top:918.30px">-</div>

<div class="t r" style="right:235.0px;top:918.30px">2</div>
<div class="bar b1" style="left:1379.9px;top:921.00px;width:1.6px"></div>
<div class="t r" style="right:30.0px;top:918.30px">-</div>

</div>

<div class="hd" style="left:77px;top:936px;font-size:14px;color:#333;-webkit-text-stroke:0.2px #333">総計</div>
<div class="t" style="left:609.5px;top:936px;font-weight:bold;color:#333">62,079</div>
<div class="t" style="right:795.5px;top:936px;font-weight:bold;color:#333">-31.7%</div>
<svg class="ar" style="left:821.8px;top:941.0px" width="5.2" height="10.5" viewBox="0 0 5.2 10.5"><path d="M1.25 0H3.95V6.2H5.2L2.6 10.5L0 6.2H1.25Z" fill="#dc4444"/></svg>
<div class="t" style="left:850.5px;top:936px;font-weight:bold;color:#333">18.08</div>
<div class="t" style="right:528px;top:936px;font-weight:bold;color:#333">-31.7%</div>
<svg class="ar" style="left:1089.6px;top:941.0px" width="5.2" height="10.5" viewBox="0 0 5.2 10.5"><path d="M1.25 0H3.95V6.2H5.2L2.6 10.5L0 6.2H1.25Z" fill="#dc4444"/></svg>
<div class="t" style="left:1117.5px;top:936px;font-weight:bold;color:#333">1%</div>
<div class="t" style="right:304px;top:936px;font-weight:bold;color:#333">26.3%</div>
<svg class="ar" style="left:1312.6px;top:941.0px" width="5.2" height="10.5" viewBox="0 0 5.2 10.5"><path d="M1.25 10.5H3.95V4.3H5.2L2.6 0L0 4.3H1.25Z" fill="#2a8a45"/></svg>
<div class="t" style="left:1340.5px;top:936px;font-weight:bold;color:#333">622</div>
<div class="t" style="right:45.5px;top:936px;font-weight:bold;color:#333">-13.7%</div>
<svg class="ar" style="left:1572.0px;top:941.0px" width="5.2" height="10.5" viewBox="0 0 5.2 10.5"><path d="M1.25 0H3.95V6.2H5.2L2.6 10.5L0 6.2H1.25Z" fill="#dc4444"/></svg>

<div class="abs" style="left:1416.5px;top:966px;font-size:15px;line-height:20px;color:#444">1 - 179 / 179</div>
<svg style="position:absolute;left:1525px;top:967px" width="12" height="18" viewBox="0 0 12 18"><path d="M9 2L3 9L9 16" fill="none" stroke="#9a9a9a" stroke-width="1.8"/></svg>
<svg style="position:absolute;left:1566px;top:967px" width="12" height="18" viewBox="0 0 12 18"><path d="M3 2L9 9L3 16" fill="none" stroke="#9a9a9a" stroke-width="1.8"/></svg>

<div style="position:absolute;left:22px;top:999.5px;width:1568px;height:95.5px;border:1.5px solid #e0e0e0;box-sizing:border-box"></div>
<div class="abs" style="left:32px;top:1010px;font-size:16px;line-height:20px;letter-spacing:1.5px;color:#333">コメント記入欄</div>
<div class="abs" style="left:30px;top:1106px;font-size:13px;line-height:20px;color:#333">* 注記</div>
<div class="abs" style="left:1520px;top:1107.5px;font-size:14.5px;line-height:20px;font-weight:bold;color:#fff;-webkit-text-stroke:0.9px #666;letter-spacing:0.2px;transform:scaleX(0.78);transform-origin:0 0">YOURLOGO</div>
<div class="abs" style="left:1535px;top:1123.5px;width:39px;height:1px;background:#bbb"></div>
</body></html>
